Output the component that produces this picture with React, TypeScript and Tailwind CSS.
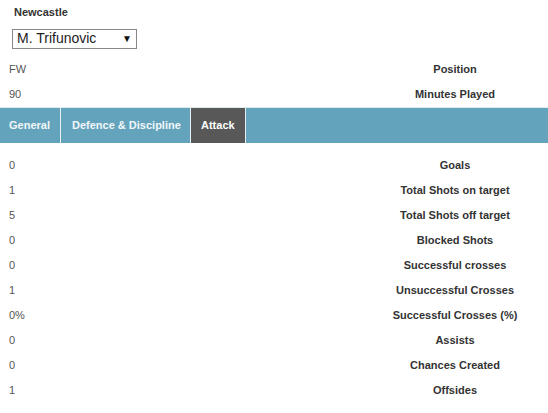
import React from "react";

const infoRows = [
  { value: "FW", label: "Position" },
  { value: "90", label: "Minutes Played" },
];

const attackRows = [
  { value: "0", label: "Goals" },
  { value: "1", label: "Total Shots on target" },
  { value: "5", label: "Total Shots off target" },
  { value: "0", label: "Blocked Shots" },
  { value: "0", label: "Successful crosses" },
  { value: "1", label: "Unsuccessful Crosses" },
  { value: "0%", label: "Successful Crosses (%)" },
  { value: "0", label: "Assists" },
  { value: "0", label: "Chances Created" },
  { value: "1", label: "Offsides" },
];

const StatRow = ({ value, label }: { value: string; label: string }) => (
  <div className="flex h-[25px] items-center">
    <span className="w-[362px] pl-[9px] text-[11px] text-[#555]">{value}</span>
    <span className="flex-1 text-center text-[11px] font-bold text-[#333]">{label}</span>
  </div>
);

export default function App() {
  return (
    <div className="h-[413px] w-[548px] bg-white font-['Liberation_Sans',Arial,sans-serif]">
      <div className="pl-[14px] pt-[4px] text-[11px] font-bold text-[#333]">Newcastle</div>
      <div className="mt-[8px] pl-[12px]">
        <div className="flex h-[20px] w-[125px] items-center justify-between border border-[#888] px-[4px]">
          <span className="text-[14px] text-[#222]">M. Trifunovic</span>
          <span className="text-[10px] text-[#111]">▼</span>
        </div>
      </div>
      <div className="mt-[8px]">
        {infoRows.map((row) => (
          <StatRow key={row.label} {...row} />
        ))}
      </div>
      <div className="flex h-[36px] border-t border-[#dfe9ee] bg-[#64a3bc]">
        <div className="flex w-[61px] items-center border-r border-[#e6eff3] pl-[9px] text-[11px] font-bold text-[#f2f7f9]">
          General
        </div>
        <div className="flex w-[130px] items-center border-r border-[#e6eff3] pl-[11px] text-[11px] font-bold text-[#f2f7f9]">
          Defence &amp; Discipline
        </div>
        <div className="flex w-[55px] items-center border-r border-[#e6eff3] bg-[#585858] pl-[10px] text-[11px] font-bold text-white">
          Attack
        </div>
      </div>
      <div className="mt-[10px]">
        {attackRows.map((row) => (
          <StatRow key={row.label} {...row} />
        ))}
      </div>
    </div>
  );
}
